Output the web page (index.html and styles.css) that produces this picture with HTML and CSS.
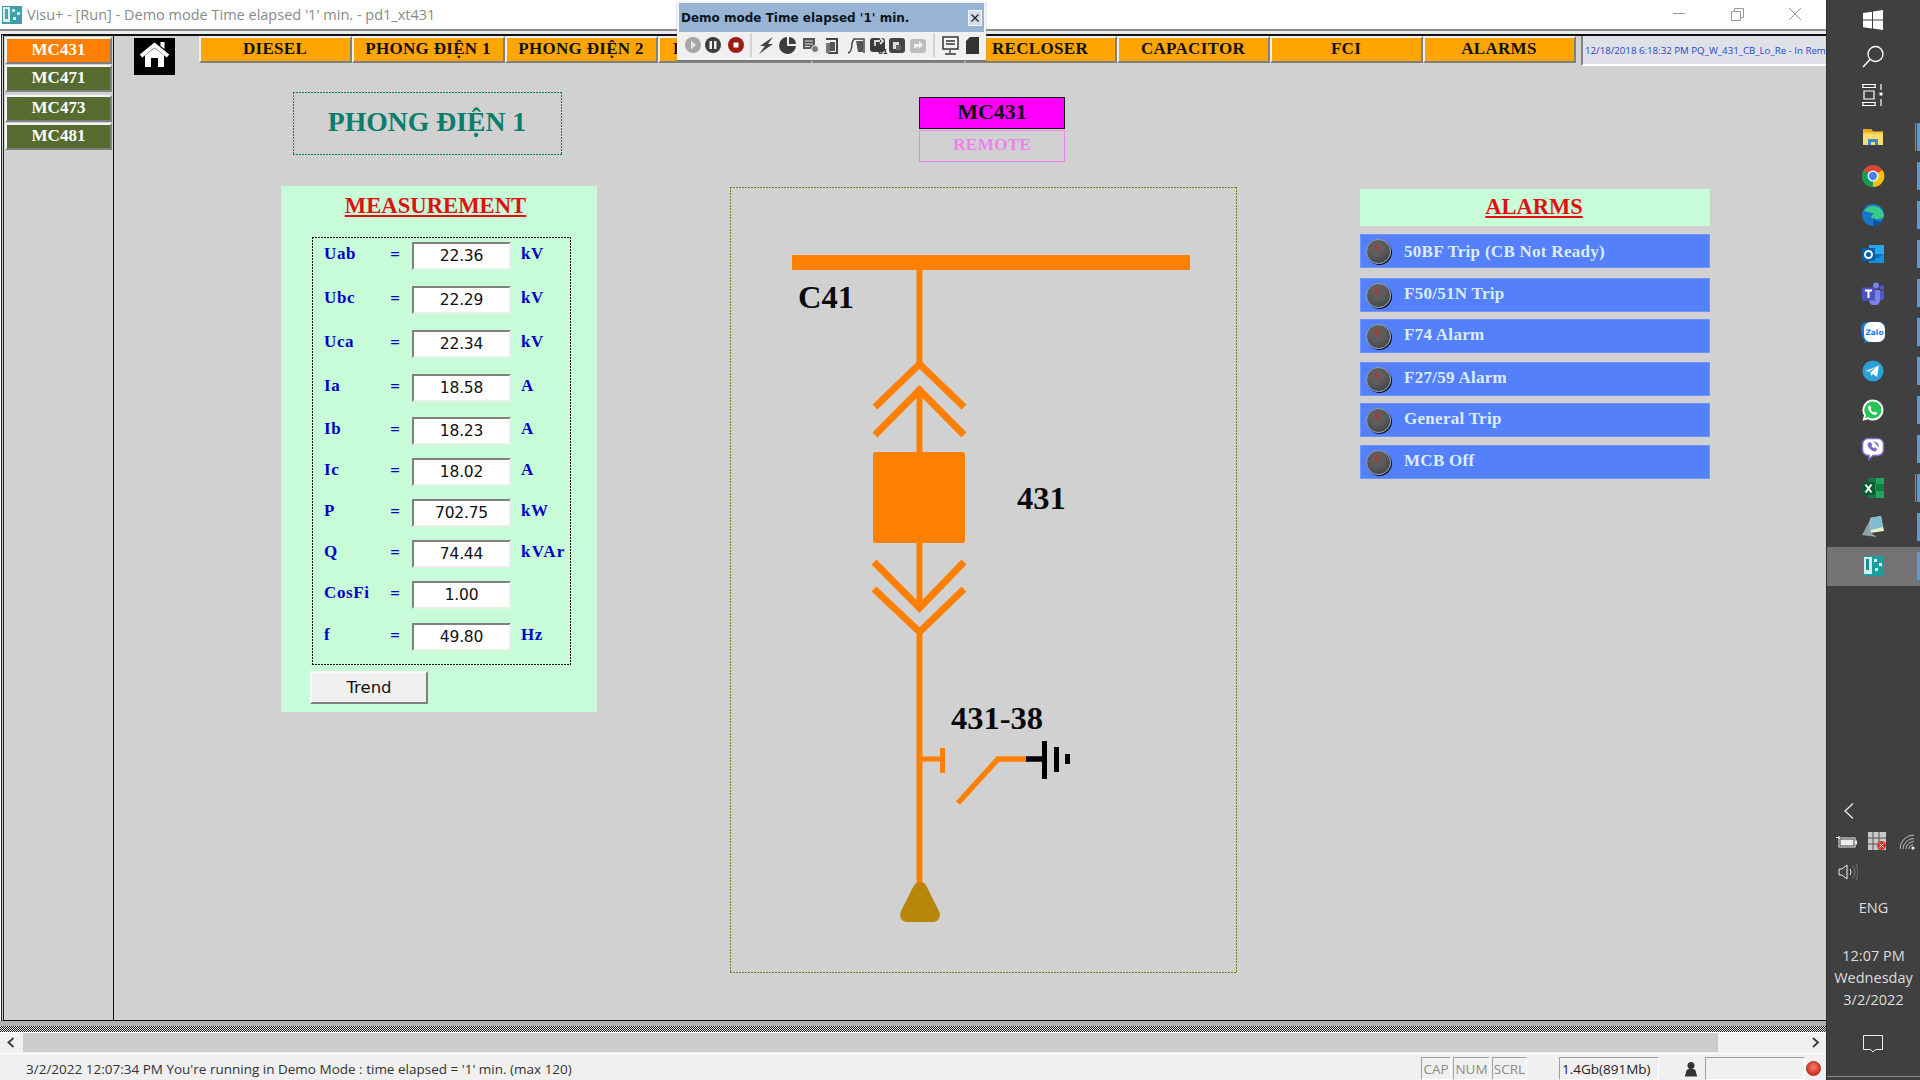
FILE: index.html
```html
<!DOCTYPE html>
<html lang="en">
<head>
<meta charset="utf-8">
<title>Visu+ - [Run]</title>
<link rel="stylesheet" href="styles.css">
</head>
<body>
<div class="window">
  <header class="titlebar">
    <svg class="app-icon" viewBox="0 0 20 20"><rect x="0" y="1" width="20" height="18" fill="#3f9ea6"/><rect x="1" y="2" width="7" height="15" fill="#d8eef0"/><rect x="3" y="4" width="3" height="10" fill="#5a9fa8"/><rect x="10" y="4" width="3" height="3" fill="#c8f0f0"/><rect x="15" y="7" width="3" height="3" fill="#c8f0f0"/><rect x="11" y="12" width="3" height="3" fill="#c8f0f0"/></svg>
    <span class="title-text">Visu+ - [Run] - Demo mode Time elapsed '1' min. - pd1_xt431</span>
    <div class="win-controls">
      <svg viewBox="0 0 58 29"><path d="M23 13.5h12" stroke="#999" fill="none"/></svg>
      <svg viewBox="0 0 58 29"><path d="M23.5 11.5h9v9h-9zM26.5 11.5v-3h9v9h-3" stroke="#999" fill="none"/></svg>
      <svg viewBox="0 0 58 29"><path d="M23 8l12 12M35 8L23 20" stroke="#999" fill="none"/></svg>
    </div>
  </header>
  <div class="frame-top"></div>

  <div class="mdi">
    <aside class="side">
      <div class="side-btn side-active">MC431</div>
      <div class="side-btn">MC471</div>
      <div class="side-btn">MC473</div>
      <div class="side-btn">MC481</div>
    </aside>
    <main class="main">
      <div class="top-row">
        <div class="home">
          <svg viewBox="0 0 41 37"><path d="M26.5 8V4h4v7z" fill="#fff"/><path d="M7 18L20.5 7 34 18" fill="none" stroke="#fff" stroke-width="4"/><path d="M11 17.500L20.500 10 30 17.500V29H24V20H17V29H11z" fill="#fff"/></svg>
        </div>
        <nav class="nav">
          <div class="nav-btn">DIESEL</div>
          <div class="nav-btn">PHONG ĐIỆN 1</div>
          <div class="nav-btn">PHONG ĐIỆN 2</div>
          <div class="nav-btn nav-clip">P</div>
          <div class="nav-btn"></div>
          <div class="nav-btn">RECLOSER</div>
          <div class="nav-btn">CAPACITOR</div>
          <div class="nav-btn">FCI</div>
          <div class="nav-btn">ALARMS</div>
        </nav>
        <div class="strip">12/18/2018 6:18:32 PM PQ_W_431_CB_Lo_Re - In Remote</div>
      </div>

      <div class="board">
        <section class="col-left">
          <div class="page-title dots">PHONG ĐIỆN 1</div>
          <div class="panel">
            <h2 class="panel-title">MEASUREMENT</h2>
            <div class="measures dots">
              <span class="m-label">Uab</span><span class="m-eq">=</span><span class="m-val">22.36</span><span class="m-unit">kV</span>
              <span class="m-label">Ubc</span><span class="m-eq">=</span><span class="m-val">22.29</span><span class="m-unit">kV</span>
              <span class="m-label">Uca</span><span class="m-eq">=</span><span class="m-val">22.34</span><span class="m-unit">kV</span>
              <span class="m-label">Ia</span><span class="m-eq">=</span><span class="m-val">18.58</span><span class="m-unit">A</span>
              <span class="m-label">Ib</span><span class="m-eq">=</span><span class="m-val">18.23</span><span class="m-unit">A</span>
              <span class="m-label">Ic</span><span class="m-eq">=</span><span class="m-val">18.02</span><span class="m-unit">A</span>
              <span class="m-label">P</span><span class="m-eq">=</span><span class="m-val">702.75</span><span class="m-unit">kW</span>
              <span class="m-label">Q</span><span class="m-eq">=</span><span class="m-val">74.44</span><span class="m-unit m-wide">kVAr</span>
              <span class="m-label">CosFi</span><span class="m-eq">=</span><span class="m-val">1.00</span><span class="m-unit"></span>
              <span class="m-label">f</span><span class="m-eq">=</span><span class="m-val">49.80</span><span class="m-unit">Hz</span>
            </div>
            <div class="trend">Trend</div>
          </div>
        </section>

        <section class="col-mid">
          <div class="feeder">MC431</div>
          <div class="remote">REMOTE</div>
          <div class="diagram dots">
            <svg viewBox="731 188 505 784">
              <g class="wire">
                <path d="M919.500 270V362M919.500 387V452M919.500 543V608M919.500 632V885"/>
                <path class="thin" d="M875 407L919.500 364 964 407M875 435L919.500 390 964 435"/>
                <path class="thin" d="M874 562L919.500 608 964 562M874 589L919.500 632 964 589"/>
                <path d="M919 759H941" class="stub"/>
                <path d="M958 803L998 759H1026" class="stub2"/>
              </g>
              <rect class="orange" x="792" y="255" width="398" height="15"/>
              <rect class="orange" x="873" y="452" width="92" height="91" rx="2"/>
              <rect class="orange" x="940" y="748" width="5" height="25"/>
              <path class="earth-line" d="M1026 759H1044"/>
              <rect class="black" x="1042" y="741" width="5" height="38"/>
              <rect class="black" x="1054" y="747" width="5" height="25"/>
              <rect class="black" x="1065" y="754" width="5" height="10"/>
              <path class="load" d="M920 889L907 915H933z"/>
              <text class="dg-text" x="798" y="308">C41</text>
              <text class="dg-text" x="1017" y="509">431</text>
              <text class="dg-text" x="951" y="729">431-38</text>
            </svg>
          </div>
        </section>

        <section class="col-right">
          <h2 class="alarm-head">ALARMS</h2>
          <div class="alarm-list">
            <div class="alarm"><i class="led"></i><span>50BF Trip (CB Not Ready)</span></div>
            <div class="alarm"><i class="led"></i><span>F50/51N Trip</span></div>
            <div class="alarm"><i class="led"></i><span>F74 Alarm</span></div>
            <div class="alarm"><i class="led"></i><span>F27/59 Alarm</span></div>
            <div class="alarm"><i class="led"></i><span>General Trip</span></div>
            <div class="alarm"><i class="led"></i><span>MCB Off</span></div>
          </div>
        </section>
      </div>
    </main>
  </div>

  <div class="split"></div>
  <div class="hscroll">
    <div class="arrow-l"><svg viewBox="0 0 23 19"><path d="M13.500 5L8.500 9.500l5 4.500" fill="none" stroke="#444" stroke-width="2"/></svg></div>
    <div class="thumb"></div>
    <div class="arrow-r"><svg viewBox="0 0 23 19"><path d="M10 5l5 4.500-5 4.500" fill="none" stroke="#444" stroke-width="2"/></svg></div>
  </div>
  <footer class="status">
    <span class="status-text">3/2/2022 12:07:34 PM You're running in Demo Mode : time elapsed = '1' min. (max 120)</span>
    <span class="cell cell-cap">CAP</span>
    <span class="cell cell-num">NUM</span>
    <span class="cell cell-scrl">SCRL</span>
    <span class="cell cell-mem">1.4Gb(891Mb)</span>
    <svg class="user" viewBox="0 0 16 18"><circle cx="8" cy="4.500" r="4" fill="#333"/><path d="M1 17L3 9.500Q8 7 13 9.500L15 17z" fill="#333"/></svg>
    <span class="cell cell-user"></span>
    <i class="status-led"></i>
  </footer>

  <div class="popup">
    <div class="popup-title">
      <span>Demo mode Time elapsed '1' min.</span>
      <svg class="popup-close" viewBox="0 0 14 16"><rect x=".5" y=".5" width="13" height="15" fill="#d4dde8" stroke="#f4f4f4"/><path d="M3.500 4.500l7 7M10.500 4.500l-7 7" stroke="#223" stroke-width="1.300"/></svg>
    </div>
    <svg class="popup-tools" viewBox="679 32 305 27">
      <circle cx="693" cy="45" r="8" fill="#a6a6a6"/><path d="M691 40.500l5 4.500-5 4.500z" fill="#e6e6e6"/>
      <circle cx="713" cy="45" r="8" fill="#3d3d3d"/><path d="M709.500 41h2.500v8h-2.500zM714 41h2.500v8H714z" fill="#eee"/>
      <circle cx="736" cy="45" r="8" fill="#9c1c12"/><rect x="733.500" y="42.500" width="5" height="5" fill="#fff"/>
      <path d="M751 33v24M934 33v24" stroke="#b8b8b8"/>
      <path d="M773 37l-13 9h5l-6 8 14-10h-5z" fill="#444"/>
      <path d="M787 37a8.500 8.500 0 1 0 9 9h-9z" fill="#3c3c3c"/><path d="M789 37a7 7 0 0 1 7 7h-7z" fill="#3c3c3c"/>
      <rect x="803" y="38" width="12" height="11" fill="#555"/><path d="M805 41h8M805 44h8M805 46.500h5" stroke="#ddd"/><circle cx="815" cy="49" r="3.500" fill="#777" stroke="#eee"/>
      <path d="M826 39h11v14h-9" fill="none" stroke="#444" stroke-width="2"/><path d="M830 42h5v9h-5z" fill="#555"/><path d="M826 43h4v10h-4z" fill="#777"/>
      <path d="M848 53q4-1 4-10l2-4h10v14" fill="none" stroke="#444" stroke-width="1.500"/><path d="M856 41h7v11h-5z" fill="#555"/>
      <rect x="870" y="38" width="15" height="14" rx="3" fill="#3c3c3c"/><path d="M875 46v-5h5M880 38l3 3-3 3" fill="none" stroke="#ddd" stroke-width="1.800"/><text class="tool-num" x="878" y="54">01</text>
      <rect x="889" y="38" width="16" height="15" rx="3" fill="#444"/><rect x="893" y="42" width="6" height="7" fill="#ddd"/><rect x="896" y="45" width="5" height="5" fill="#666"/>
      <rect x="910" y="39" width="16" height="14" rx="3" fill="#bdbdbd"/><path d="M914 48v-4h5v-3l4 4-4 4v-2z" fill="#eee"/>
      <rect x="943" y="37" width="15" height="12" fill="#f5f5f5" stroke="#333" stroke-width="1.500"/><path d="M946 41h9M946 44h9M950 50v3M945 54h11" stroke="#333" stroke-width="1.300"/>
      <path d="M966 41l4-4h9v17h-13z" fill="#333"/>
    </svg>
  </div>
</div>

<aside class="taskbar">
  <div class="tb-sys-group">
    <div class="tb-row tb-sys"><svg class="tb-icon" viewBox="0 0 24 24"><path d="M2 5l9-1.300V11.500H2zM12 3.500L22 2v9.500H12zM2 12.500h9v8L2 19.300zM12 12.500h10V22l-10-1.400z" fill="#fff"/></svg></div>
    <div class="tb-row tb-sys"><svg class="tb-icon" viewBox="0 0 24 24"><circle cx="14.500" cy="9" r="7.500" fill="none" stroke="#fff" stroke-width="1.300"/><path d="M9 14.500L2 22" stroke="#fff" stroke-width="1.500"/></svg></div>
    <div class="tb-row tb-sys"><svg class="tb-icon" viewBox="0 0 24 24"><path d="M1 1.500h14M1 4.500h14M3 8h10v8H3zM1 19.500h14M1 22.500h14M2 1.500v3M14 1.500v3M2 19.500v3M14 19.500v3" fill="none" stroke="#fff" stroke-width="1.200"/><path d="M20 1v6M20 16v7" stroke="#fff" stroke-width="1.200"/><rect x="18.500" y="9.500" width="3" height="3" fill="#fff"/></svg></div>
  </div>

  <div class="tb-apps">
    <div class="tb-row tb-app tb-double"><svg class="tb-icon" viewBox="0 0 24 24"><path d="M2 4h8l2 2.500h10V20H2z" fill="#f9c933"/><path d="M2 4h8l2 3H2z" fill="#e8a820"/><path d="M2 9h20v11H2z" fill="#fbdd6f"/><path d="M7 20v-6h10v6h-3v-3h-4v3z" fill="#3a8ac9"/></svg></div>
    <div class="tb-row tb-app"><svg class="tb-icon" viewBox="0 0 24 24"><circle cx="12" cy="12" r="11" fill="#db4437"/><path d="M12 12L2.500 6.500A11 11 0 0 0 12 23z" fill="#0f9d58"/><path d="M12 12v11a11 11 0 0 0 9.500-17z" fill="#f4c20d"/><circle cx="12" cy="12" r="5.500" fill="#fff"/><circle cx="12" cy="12" r="4.200" fill="#4285f4"/></svg></div>
    <div class="tb-row tb-app"><svg class="tb-icon" viewBox="0 0 24 24"><circle cx="12" cy="12" r="11" fill="#1676c4"/><path d="M3 8A11 11 0 0 1 23 12c0 3-3 4-6 4h-4c-4 0-3-4 0-5 -3-2-7-2-10-3z" fill="#37c98a"/><path d="M13 14c0 4 4 6 8 4-2 3-5 5-9 5 2-2-1-7 1-9z" fill="#0b4f9e"/></svg></div>
    <div class="tb-row tb-app"><svg class="tb-icon" viewBox="0 0 24 24"><rect x="8" y="3" width="15" height="18" fill="#28a8ea"/><path d="M8 12h15v9H8z" fill="#0f6cbd"/><path d="M23 12l-8 5-7-5v9h15z" fill="#1490df"/><rect x="1" y="6" width="13" height="13" fill="#0a5ea8"/><circle cx="7.500" cy="12.500" r="3.500" fill="none" stroke="#fff" stroke-width="2"/></svg></div>
    <div class="tb-row tb-app"><svg class="tb-icon" viewBox="0 0 24 24"><circle cx="15" cy="4.500" r="3" fill="#7b83eb"/><circle cx="21" cy="6.500" r="2.300" fill="#5059c9"/><path d="M17 9.500h6v8a4 4 0 0 1-6 1z" fill="#5059c9"/><path d="M8 9h11v10a5 5 0 0 1-11 0z" fill="#7b83eb"/><rect x="1" y="6.500" width="13" height="13" fill="#4b53bc"/><path d="M4 9.500h7M7.500 9.500v7.500" stroke="#fff" stroke-width="2"/></svg></div>
    <div class="tb-row tb-app"><svg class="tb-icon" viewBox="0 0 24 24"><path d="M6 2h12a6 6 0 0 1 6 6v8a6 6 0 0 1-6 6H8c-2 0-3 1-5 .500 1-1 1-2 0-3C1 18 0 14 0 8a6 6 0 0 1 6-6z" fill="#1677e8"/><rect x="3" y="2" width="21" height="20" rx="7" fill="#fff"/><text class="zalo" x="13.500" y="15">Zalo</text></svg></div>
    <div class="tb-row tb-app"><svg class="tb-icon" viewBox="0 0 24 24"><circle cx="12" cy="12" r="10.500" fill="#2aa1da"/><path d="M4.500 12L18 6.500 16 18l-4-3-2 2-.5-3.500 6-6-7.500 5z" fill="#fff"/></svg></div>
    <div class="tb-row tb-app"><svg class="tb-icon" viewBox="0 0 24 24"><path d="M12 1.500A10.500 10.500 0 0 1 12 22.500c-2 0-3.500-.5-5-1.300l-5.500 1.500 1.500-5.300A10.500 10.500 0 0 1 12 1.500z" fill="#fff"/><path d="M12 3.500a8.500 8.500 0 0 1 0 17c-1.800 0-3.300-.5-4.700-1.300l-3 .8.800-3A8.500 8.500 0 0 1 12 3.500z" fill="#25c454"/><path d="M8 7.500c-1.500 1.500-1 4 1 6.500s5 3.500 6.500 2.500l1-1.500-2.500-1.500-1 1c-1.500-.5-3-2-3.500-3.500l1-1-1.500-2.500z" fill="#fff"/></svg></div>
    <div class="tb-row tb-app"><svg class="tb-icon" viewBox="0 0 24 24"><path d="M7 1.500h10a5.500 5.500 0 0 1 5.500 5.500v6a5.500 5.500 0 0 1-5.500 5.500h-5l-4 4v-4.200A5.500 5.500 0 0 1 1.500 13V7A5.500 5.500 0 0 1 7 1.500z" fill="#fff" stroke="#7d66c8" stroke-width="1.500"/><path d="M7.500 6c-1 1-.5 3 1 5s4 3.500 6 3l1.500-1.500-2.500-2-1 1c-1-.5-2-1.500-2.500-2.500l1-1-1.500-2.500zM13 5a5 5 0 0 1 4.500 5" fill="#7d66c8" stroke="#7d66c8" stroke-width=".8"/></svg></div>
    <div class="tb-row tb-app tb-double"><svg class="tb-icon" viewBox="0 0 24 24"><rect x="7" y="2" width="16" height="20" fill="#21a366"/><path d="M7 2h8v6H7zM15 8h8v7h-8zM7 15h8v7H7z" fill="#107c41"/><rect x="1" y="6" width="13" height="13" fill="#0b5a30"/><path d="M4.500 8.500l6 8M10.500 8.500l-6 8" stroke="#fff" stroke-width="2"/></svg></div>
    <div class="tb-row tb-app"><svg class="tb-icon" viewBox="0 0 24 24"><path d="M9 3l11-2 3 15-14 2z" fill="#e8f0c8"/><path d="M9 3l11-2 2 11-12 3z" fill="#7fbccf"/><path d="M1 20L9 5l1 13 6 4z" fill="#8fa3ac"/></svg></div>
    <div class="tb-row tb-app tb-active"><svg class="tb-icon" viewBox="0 0 24 24"><rect x="2" y="2" width="20" height="20" fill="#1c9da0"/><rect x="3" y="3" width="8" height="17" fill="#cdeff0"/><rect x="5" y="5" width="3" height="11" fill="#1c8a90"/><rect x="13" y="5" width="3" height="3" fill="#d8f5f5"/><rect x="18" y="9" width="3" height="3" fill="#d8f5f5"/><rect x="14" y="14" width="3" height="3" fill="#d8f5f5"/></svg></div>
  </div>

  <div class="tray">
    <svg class="tray-chev" viewBox="0 0 12 18"><path d="M10 1.500L2 9l8 7.500" fill="none" stroke="#eee" stroke-width="1.200"/></svg>
    <div class="tray-icons">
      <svg class="ic-batt" viewBox="0 0 21 13"><path d="M0 2.500h3M3 1v3" stroke="#eee"/><rect x="3" y="3" width="16" height="9" fill="none" stroke="#eee"/><rect x="4.500" y="4.500" width="13" height="6" fill="#eee"/><rect x="19" y="5.500" width="2" height="4" fill="#eee"/></svg>
      <svg class="ic-net" viewBox="0 0 18 18"><rect width="18" height="18" fill="#c9c9c9"/><path d="M5 0v18M0 6h18M0 12h18M11 0v18" stroke="#555"/><circle cx="13.500" cy="13.500" r="4.500" fill="#d23a2c"/><path d="M11.500 11.500l4 4M15.500 11.500l-4 4" stroke="#fff"/></svg>
      <svg class="ic-wifi" viewBox="0 0 16 18"><path d="M1 17A14 14 0 0 1 15 3M4 17A11 11 0 0 1 15 6.500M7 17a8 8 0 0 1 8-7.500M10 17a5 5 0 0 1 4-4.500" fill="none" stroke="#bbb"/><circle cx="14" cy="16" r="1.600" fill="#eee"/></svg>
    </div>
    <svg class="ic-vol" viewBox="0 0 20 18"><path d="M1 6h3l5-4v14l-5-4H1z" fill="none" stroke="#eee"/><path d="M12 6q2 3 0 6" fill="none" stroke="#eee"/><path d="M15 3q4 6 0 12M18 1q4 8 0 16" fill="none" stroke="#777"/></svg>
    <div class="tray-lang">ENG</div>
    <div class="tray-clock">
      <div>12:07 PM</div>
      <div>Wednesday</div>
      <div>3/2/2022</div>
    </div>
    <svg class="ic-note" viewBox="0 0 20 18"><path d="M.5.5h19v14h-7l-2.500 2.500L7.500 14.500h-7z" fill="none" stroke="#eee"/></svg>
    <div class="tray-rule"></div>
  </div>
</aside>
</body>
</html>
```

FILE: styles.css
```css
* { box-sizing: border-box; }
html, body { margin: 0; height: 100%; }
body {
  display: flex;
  width: 1920px;
  height: 1080px;
  overflow: hidden;
  background: #404040;
  font-family: "Liberation Serif", serif;
}
svg { display: block; }

/* dotted frame: 1px line, dots on a 3px period */
.dots {
  --dot: #111;
  --across: repeating-linear-gradient(90deg, var(--dot) 0 2px, transparent 2px 3px);
  --down: repeating-linear-gradient(180deg, var(--dot) 0 2px, transparent 2px 3px);
  background:
    var(--across) left top / 100% 1px no-repeat,
    var(--across) left bottom / 100% 1px no-repeat,
    var(--down) left top / 1px 100% no-repeat,
    var(--down) right top / 1px 100% no-repeat;
}

/* window */
.window {
  position: relative;
  width: 1826px;
  height: 1080px;
  display: flex;
  flex-direction: column;
  background: #fff;
}
.titlebar {
  height: 29px;
  display: flex;
  align-items: center;
  padding-left: 2px;
  background: #fff;
}
.app-icon { width: 20px; height: 20px; }
.title-text {
  margin-left: 5px;
  font: 14.500px "Open Sans", sans-serif;
  color: #8a8a8a;
  white-space: nowrap;
}
.win-controls { margin-left: auto; margin-right: 2px; display: flex; }
.win-controls svg { width: 58px; height: 29px; }
.frame-top {
  height: 5px;
  background: #ececec;
  border-top: 2px solid #8c8c8c;
}

.mdi {
  height: 987px;
  display: flex;
  margin-left: 1px;
  border-left: 3px double #222;
  border-top: 2px solid #111;
  border-bottom: 1px solid #111;
  background: #d1d1d1;
}

/* left feeder menu */
.side {
  width: 110px;
  flex: none;
  display: grid;
  grid-template-rows: 28px 30px 28px 27px;
  align-content: start;
  padding: 1px 0 0 1px;
  border-right: 1px solid #111;
}
.side-btn {
  width: 107px;
  height: 27px;
  display: flex;
  align-items: center;
  justify-content: center;
  padding-bottom: 1px;
  color: #fff;
  background: #556b2f;
  font-weight: 700;
  font-size: 17px;
  border: 2px solid;
  border-color: #f4f4f4 #808080 #808080 #f4f4f4;
}
.side-active { background: #ff8000; }

.main { flex: 1; min-width: 0; display: flex; flex-direction: column; }

.top-row { height: 39px; display: flex; align-items: flex-start; }
.home {
  width: 41px;
  height: 37px;
  margin: 2px 0 0 20px;
  background: #000;
  flex: none;
}
.home svg { width: 41px; height: 37px; }
.nav { display: flex; margin-left: 24px; flex: none; }
.nav-btn {
  width: 153px;
  height: 27px;
  display: flex;
  align-items: center;
  justify-content: center;
  padding: 0 1px 2px 0;
  background: #ffa500;
  color: #111;
  font-weight: 700;
  font-size: 17px;
  letter-spacing: .3px;
  white-space: nowrap;
  border: 2px solid;
  border-color: #f0f0f0 #808080 #808080 #f0f0f0;
}
.nav-clip { justify-content: flex-start; padding-left: 13px; }
.strip {
  width: 245px;
  height: 30px;
  margin-left: 5px;
  padding-left: 2px;
  display: flex;
  align-items: center;
  overflow: hidden;
  white-space: nowrap;
  background: #e0e0e8;
  border-left: 2px solid #808080;
  border-bottom: 2px solid #fff;
  color: #2446c8;
  font: 9.700px "Open Sans", sans-serif;
}

.board { display: flex; flex: 1; align-items: flex-start; }

/* left column */
.col-left { width: 316px; margin-left: 167px; flex: none; }
.page-title {
  --dot: #0a7d6b;
  width: 269px;
  height: 63px;
  margin: 17px 0 0 12px;
  padding: 0 1px 4px 0;
  display: flex;
  align-items: center;
  justify-content: center;
  color: #0a7d6b;
  font-weight: 700;
  font-size: 27.700px;
}
.panel {
  height: 526px;
  margin-top: 31px;
  padding-top: 1px;
  background: #c8fcd8;
}
.panel-title {
  margin: 0;
  height: 50px;
  padding: 4px 7px 0 0;
  text-align: center;
  color: #e01010;
  font-size: 22.700px;
  line-height: 30px;
  font-weight: 700;
  text-decoration: underline;
}
.measures {
  width: 259px;
  height: 428px;
  margin-left: 31px;
  padding: 5px 0 0 12px;
  display: grid;
  grid-template-columns: 60px 28px 99px 1fr;
  grid-template-rows: 44px 44px 44px 43px 41px 41px 41px 41px 42px 28px;
}
.m-label, .m-unit {
  height: 28px;
  display: flex;
  align-items: center;
  padding-bottom: 4px;
  color: #0000c8;
  font-weight: 700;
  font-size: 17px;
  letter-spacing: .6px;
  white-space: nowrap;
}
.m-eq {
  height: 28px;
  padding: 0 6px 3px 0;
  display: flex;
  align-items: center;
  justify-content: center;
  color: #0000c8;
  font-weight: 700;
  font-size: 17px;
}
.m-unit { padding-left: 10px; }
.m-wide { letter-spacing: 1.300px; }
.m-val {
  height: 28px;
  display: flex;
  align-items: center;
  justify-content: center;
  background: #fff;
  color: #111;
  font: 15.500px "DejaVu Sans", sans-serif;
  letter-spacing: -.2px;
  border: 2px solid;
  border-color: #808080 #e8f0e8 #e8f0e8 #808080;
}
.trend {
  width: 118px;
  height: 33px;
  margin: 6px 0 0 29px;
  display: flex;
  align-items: center;
  justify-content: center;
  background: #f0f0f0;
  color: #111;
  font: 16.500px "DejaVu Sans", sans-serif;
  border: 2px solid;
  border-color: #f8f8f8 #808080 #808080 #f8f8f8;
}

/* middle column */
.col-mid { width: 507px; margin-left: 133px; flex: none; }
.feeder, .remote {
  width: 146px;
  height: 32px;
  margin-left: 189px;
  display: flex;
  align-items: center;
  justify-content: center;
  font-weight: 700;
}
.feeder {
  margin-top: 22px;
  padding-bottom: 2px;
  background: #ff00ff;
  border: 1px solid #111;
  color: #111;
  font-size: 22px;
}
.remote {
  margin-top: 1px;
  padding-bottom: 3px;
  border: 1px solid #ee82ee;
  color: #ee82ee;
  font-size: 17.500px;
}
.diagram {
  --dot: #7a7a20;
  width: 507px;
  height: 786px;
  margin-top: 25px;
  padding: 1px;
}
.diagram svg { width: 505px; height: 784px; }
.wire path { fill: none; stroke: #ff8000; stroke-width: 6; }
.wire path.thin { stroke-width: 7; }
.wire path.stub { stroke-width: 5; }
.wire path.stub2 { stroke-width: 5.500; }
.orange { fill: #ff8000; }
.black { fill: #000; }
.earth-line { stroke: #000; stroke-width: 5.500; fill: none; }
.load { fill: #b8860b; stroke: #b8860b; stroke-width: 14; stroke-linejoin: round; }
.dg-text {
  font-family: "Liberation Serif", serif;
  font-weight: 700;
  font-size: 32.500px;
  fill: #0a0a0a;
}
.tool-num { font: 700 7px "DejaVu Sans", sans-serif; fill: #333; }
.zalo { font: 700 7.500px "DejaVu Sans", sans-serif; fill: #1677e8; text-anchor: middle; }

/* right column */
.col-right { width: 350px; margin-left: 123px; margin-top: 114px; flex: none; }
.alarm-head {
  margin: 0;
  height: 37px;
  padding-right: 2px;
  text-align: center;
  background: #c8fcd8;
  color: #e01010;
  font-size: 22.500px;
  line-height: 35px;
  font-weight: 700;
  text-decoration: underline;
}
.alarm-list {
  margin-top: 8px;
  display: grid;
  grid-template-rows: 44px 41px 43px 41px 42px 34px;
}
.alarm {
  height: 34px;
  display: flex;
  align-items: center;
  padding-left: 6px;
  background: #5580fb;
  border: 1px solid #6f94fb;
  color: #dcecff;
  font-weight: 700;
  font-size: 17px;
  letter-spacing: .28px;
}
.alarm span { margin-left: 12px; padding-bottom: 2px; }
.alarm:first-child span { padding-bottom: 0; margin-top: 2px; }
.led {
  width: 25px;
  height: 25px;
  flex: none;
  margin-left: -1px;
  margin-right: 1px;
  border-radius: 50%;
  background: radial-gradient(circle at 42% 32%, #a83a32 0 1px, #6a5a5a 3px, #5c5c5c 40%, #383838 100%);
  border: 1px solid #94a0a0;
  box-shadow: 1px 1px 0 #111;
}

/* bottom */
.split {
  height: 12px;
  padding-top: 5px;
  background: #b0b0b0;
  border-bottom: 1px solid #fff;
}
.split::after {
  content: "";
  display: block;
  height: 6px;
  background: repeating-conic-gradient(#111 0 25%, #eee 0 50%) 0 0 / 2px 2px;
}
.hscroll { height: 20px; display: flex; background: #f0f0f0; }
.arrow-l, .arrow-r { flex: none; }
.arrow-l { width: 23px; }
.arrow-r { width: 23px; margin-left: auto; }
.arrow-l svg, .arrow-r svg { width: 23px; height: 19px; }
.thumb { width: 1695px; height: 19px; background: #cdcdcd; }
.status {
  height: 27px;
  display: flex;
  align-items: flex-end;
  background: #f0f0f0;
  border-top: 1px solid #fff;
  font: 13.500px "Open Sans", sans-serif;
  color: #333;
  white-space: nowrap;
}
.status-text { width: 1421px; padding: 3px 0 0 26px; align-self: center; }
.cell {
  height: 23px;
  display: flex;
  align-items: center;
  justify-content: center;
  border: 1px solid;
  border-color: #a0a0a0 #fff #fff #a0a0a0;
  color: #8a8a8a;
}
.cell-cap { width: 30px; margin-right: 2px; }
.cell-num { width: 37px; margin-right: 2px; }
.cell-scrl { width: 35px; margin-right: 32px; }
.cell-mem { width: 100px; margin-right: 25px; padding-left: 2px; justify-content: flex-start; color: #222; }
.user { width: 14px; height: 17px; margin: 0 0 2px 0; flex: none; }
.cell-user { width: 100px; margin-left: 7px; margin-right: 2px; }
.status-led {
  width: 15px;
  height: 15px;
  margin-bottom: 4px;
  margin-left: -1px;
  border-radius: 50%;
  background: radial-gradient(circle at 50% 40%, #f08070, #d83020 70%);
  border: 1px solid #a03020;
  flex: none;
}

/* demo popup */
.popup {
  position: absolute;
  left: 677px;
  top: 1px;
  width: 309px;
  height: 59px;
  background: #f0f0f0;
  border: 2px solid #f4f4f4;
  box-shadow: 0 1px 1px #777;
}
.popup-title {
  height: 29px;
  display: flex;
  align-items: center;
  justify-content: space-between;
  padding: 0 2px 0 2px;
  background: #98b4d4;
  font: 700 12px "DejaVu Sans", sans-serif;
  color: #0c1420;
}
.popup-close { width: 14px; height: 16px; }
.popup-tools { width: 305px; height: 27px; }

/* taskbar */
.taskbar {
  width: 94px;
  height: 1080px;
  flex: none;
  display: flex;
  flex-direction: column;
  background: #404040;
  border-left: 1px solid #303030;
  color: #ddd;
}
.tb-sys-group { padding-top: 1px; }
.tb-row { display: flex; align-items: center; justify-content: center; position: relative; }
.tb-sys { height: 37.500px; }
.tb-icon { width: 24px; height: 24px; margin-left: -1px; }
.tb-apps { margin-top: 4px; display: flex; flex-direction: column; }
.tb-app { height: 39px; }
.tb-app::after {
  content: "";
  position: absolute;
  right: 0;
  top: 5px;
  width: 3px;
  height: 28px;
  background: #5b9bd5;
}
.tb-double::before {
  content: "";
  position: absolute;
  right: 4px;
  top: 5px;
  width: 1px;
  height: 28px;
  background: #5b9bd5;
}
.tb-active { background: #737373; }
.tray { margin-top: auto; display: flex; flex-direction: column; height: 280px; }
.tray-chev { width: 12px; height: 18px; margin: 2px 0 0 16px; }
.tray-icons { display: flex; align-items: center; margin-top: 12px; height: 18px; }
.ic-batt { width: 21px; height: 13px; margin-left: 9px; }
.ic-net { width: 18px; height: 18px; margin-left: 11px; }
.ic-wifi { width: 16px; height: 18px; margin-left: 13px; }
.ic-vol { width: 20px; height: 18px; margin: 13px 0 0 11px; }
.tray-lang {
  margin-top: 17px;
  text-align: center;
  font: 14.500px "Open Sans", sans-serif;
  line-height: 20px;
}
.tray-clock {
  margin-top: 27px;
  text-align: center;
  font: 14.500px "Open Sans", sans-serif;
  line-height: 22px;
}
.ic-note { width: 20px; height: 18px; margin: 24px 0 0 36px; }
.tray-rule { height: 1px; margin-top: 23px; background: #8a8a8a; }
```
